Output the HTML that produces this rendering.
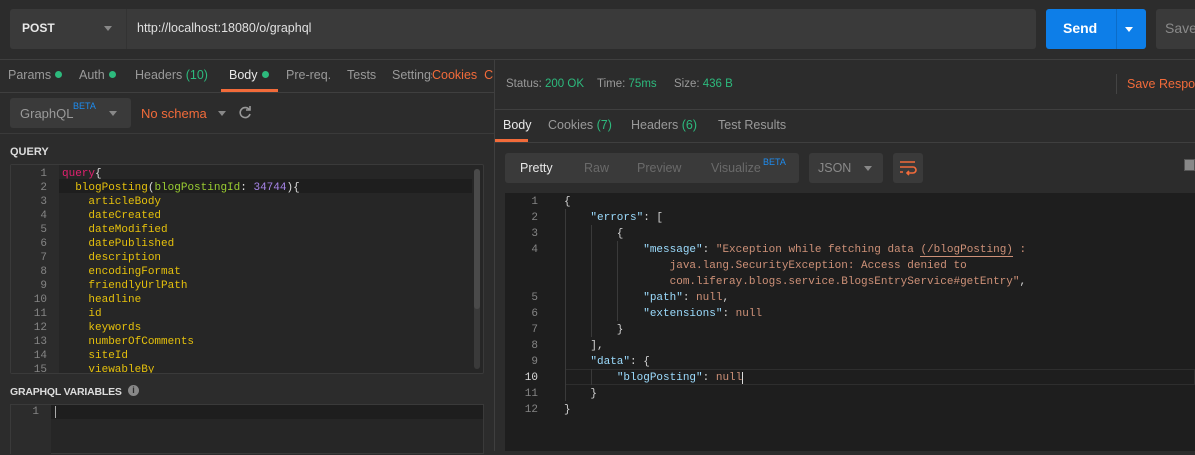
<!DOCTYPE html>
<html><head><meta charset="utf-8"><style>
*{margin:0;padding:0;box-sizing:border-box}
body{width:1195px;height:451px;background:#2c2c2c;font-family:"Liberation Sans",sans-serif;font-size:12px;color:#9a9a9a;position:relative;overflow:hidden}
.a{position:absolute;white-space:nowrap}
pre.a{white-space:pre}
.mono{font-family:"Liberation Mono",monospace}
.g{color:#2dba7d}
.o{color:#f26b3a}
.dot{display:inline-block;width:7px;height:7px;border-radius:50%;background:#2dba7d;margin-left:4px;vertical-align:1px}
.ln{position:absolute;text-align:right;color:#858585}
.t{position:absolute;top:68px;font-size:12.5px;white-space:nowrap}
.r{position:absolute;top:118px;font-size:12.5px;white-space:nowrap}
.s{position:absolute;top:78px;font-size:11.5px;white-space:nowrap}
.p{position:absolute;top:161px;font-size:12.5px;color:#6a6a6a;white-space:nowrap}
</style></head><body>
<!-- top bar -->
<div class="a" style="left:10px;top:9px;width:1026px;height:40px;background:#3a3a3a;border-radius:3px"></div>
<div class="a" style="left:126px;top:9px;width:1px;height:40px;background:#333"></div>
<div class="a" style="left:22px;top:21px;color:#e8e8e8;font-weight:bold;font-size:12px">POST</div>
<div class="a" style="left:104px;top:26px;border:4px solid transparent;border-top:5px solid #888;"></div>
<div class="a" style="left:137px;top:21px;color:#e0e0e0;font-size:12.5px">http://localhost:18080/o/graphql</div>
<div class="a" style="left:1046px;top:9px;width:100px;height:40px;background:#0d7ee8;border-radius:3px"></div>
<div class="a" style="left:1116px;top:9px;width:1px;height:40px;background:#0b6cc8"></div>
<div class="a" style="left:1063px;top:20px;color:#fff;font-weight:bold;font-size:14px">Send</div>
<div class="a" style="left:1125px;top:27px;border:4px solid transparent;border-top:5px solid #fff"></div>
<div class="a" style="left:1156px;top:9px;width:39px;height:40px;background:#3a3a3a;border-radius:3px 0 0 3px"></div>
<div class="a" style="left:1165px;top:20px;color:#8a8a8a;font-size:14px;width:30px;overflow:hidden">Save</div>
<div class="a" style="left:0;top:59px;width:1195px;height:1px;background:#3f3f3f"></div>
<!-- left tabs -->
<div class="t" style="left:8px">Params<span class="dot"></span></div>
<div class="t" style="left:79px">Auth<span class="dot"></span></div>
<div class="t" style="left:135px">Headers <span class="g">(10)</span></div>
<div class="t" style="left:229px;color:#e8e8e8">Body<span class="dot"></span></div>
<div class="t" style="left:286px">Pre-req.</div>
<div class="t" style="left:347px">Tests</div>
<div class="t" style="left:392px">Settings</div>
<div class="t o" style="left:432px;background:#2c2c2c;width:62px;overflow:hidden">Cookies &nbsp;C</div>
<div class="a" style="left:221px;top:89px;width:57px;height:3px;background:#f26b3a"></div>
<div class="a" style="left:0;top:92px;width:494px;height:1px;background:#3f3f3f"></div>
<div class="a" style="left:494px;top:59px;width:1px;height:392px;background:#3f3f3f"></div>
<!-- graphql row -->
<div class="a" style="left:10px;top:98px;width:121px;height:30px;background:#3a3a3a;border-radius:3px"></div>
<div class="a" style="left:20px;top:106px;font-size:13px;color:#9a9a9a">GraphQL</div>
<div class="a" style="left:73px;top:101px;font-size:9px;color:#1d8cf0">BETA</div>
<div class="a" style="left:109px;top:111px;border:4px solid transparent;border-top:5px solid #888"></div>
<div class="a o" style="left:141px;top:106px;font-size:13px">No schema</div>
<div class="a" style="left:218px;top:111px;border:4px solid transparent;border-top:5px solid #888"></div>
<svg class="a" style="left:238px;top:105px" width="14" height="14" viewBox="0 0 14 14"><path d="M11.5 5A5 5 0 1 0 12 9" fill="none" stroke="#999" stroke-width="1.6"/><path d="M8 5h4V1" fill="none" stroke="#999" stroke-width="1.6"/></svg>
<div class="a" style="left:0;top:133px;width:494px;height:1px;background:#3a3a3a"></div>
<div class="a" style="left:10px;top:146px;font-weight:bold;color:#ddd;font-size:11px">QUERY</div>
<!-- query editor -->
<div class="a" style="left:10px;top:164px;width:474px;height:210px;background:#262626;border:1px solid #3a3a3a;border-radius:2px;overflow:hidden">
<div class="a" style="left:0;top:0;width:48px;height:210px;background:#2c2c2c"></div>
<div class="a" style="left:48px;top:14px;width:413px;height:14px;background:#1e1e1e"></div>
<div class="a" style="left:463px;top:4px;width:6px;height:200px;background:#3a3a3a;border-radius:3px"></div>
<div class="a" style="left:463px;top:4px;width:6px;height:140px;background:#4a4a4a;border-radius:3px"></div>
<div class="ln mono" style="left:0;top:2px;width:36px;font-size:11px;line-height:14px">1<br>2<br>3<br>4<br>5<br>6<br>7<br>8<br>9<br>10<br>11<br>12<br>13<br>14<br>15</div>
<pre class="a mono" style="left:51px;top:2px;font-size:11px;line-height:14px;color:#e5c00c"><span style="color:#e0206e">query</span><span style="color:#ddd">{</span>
  blogPosting<span style="color:#ddd">(</span><span style="color:#9acd32">blogPostingId</span><span style="color:#ddd">: </span><span style="color:#a684e8">34744</span><span style="color:#ddd">){</span>
    articleBody
    dateCreated
    dateModified
    datePublished
    description
    encodingFormat
    friendlyUrlPath
    headline
    id
    keywords
    numberOfComments
    siteId
    viewableBy</pre>
</div>
<div class="a" style="left:10px;top:386px;font-weight:bold;color:#ddd;font-size:10.5px;letter-spacing:-0.2px">GRAPHQL VARIABLES</div>
<div class="a" style="left:128px;top:385px;width:11px;height:11px;border-radius:50%;background:#888;color:#2c2c2c;font-size:9px;text-align:center;line-height:11px;font-weight:bold">i</div>
<div class="a" style="left:10px;top:404px;width:474px;height:50px;background:#262626;border:1px solid #3a3a3a">
<div class="a" style="left:0;top:0;width:40px;height:50px;background:#2c2c2c"></div>
<div class="a" style="left:40px;top:0;width:432px;height:14px;background:#1e1e1e"></div>
<div class="a" style="left:44px;top:1px;width:1px;height:12px;background:#aaa"></div>
<div class="ln mono" style="left:0;top:1px;width:28px;font-size:11px">1</div>
</div>
<!-- right status -->
<div class="s" style="left:506px">Status: <span class="g">200 OK</span></div>
<div class="s" style="left:597px">Time: <span class="g">75ms</span></div>
<div class="s" style="left:674px">Size: <span class="g">436 B</span></div>
<div class="a" style="left:1116px;top:74px;width:1px;height:20px;background:#444"></div>
<div class="a o" style="left:1127px;top:77px;font-size:12.5px;width:68px;overflow:hidden">Save Response</div>
<div class="a" style="left:495px;top:109px;width:700px;height:1px;background:#3f3f3f"></div>
<div class="r" style="left:503px;color:#e8e8e8">Body</div>
<div class="r" style="left:548px">Cookies <span class="g">(7)</span></div>
<div class="r" style="left:631px">Headers <span class="g">(6)</span></div>
<div class="r" style="left:718px">Test Results</div>
<div class="a" style="left:495px;top:139px;width:33px;height:3px;background:#f26b3a"></div>
<div class="a" style="left:495px;top:142px;width:700px;height:1px;background:#3f3f3f"></div>
<!-- toolbar -->
<div class="a" style="left:505px;top:153px;width:294px;height:30px;background:#3a3a3a;border-radius:3px"></div>
<div class="p" style="left:520px;color:#e8e8e8">Pretty</div>
<div class="p" style="left:584px">Raw</div>
<div class="p" style="left:637px">Preview</div>
<div class="p" style="left:711px">Visualize</div>
<div class="a" style="left:763px;top:157px;font-size:9px;color:#1d8cf0">BETA</div>
<div class="a" style="left:809px;top:153px;width:74px;height:30px;background:#3a3a3a;border-radius:3px"></div>
<div class="a" style="left:818px;top:161px;font-size:12.5px;color:#8a8a8a">JSON</div>
<div class="a" style="left:864px;top:166px;border:4px solid transparent;border-top:5px solid #888"></div>
<div class="a" style="left:893px;top:153px;width:30px;height:30px;background:#3a3a3a;border-radius:3px"></div>
<svg class="a" style="left:898px;top:158px" width="20" height="20" viewBox="0 0 20 20"><path d="M2 4h15M2 9h13a3 3 0 0 1 0 6h-6M11 13l-2 2 2 2M2 14h3" fill="none" stroke="#f26b3a" stroke-width="1.6"/></svg>
<div class="a" style="left:1184px;top:159px;width:11px;height:12px;background:#888;border:1px solid #555"></div>
<!-- response code -->
<div class="a" style="left:505px;top:193px;width:690px;height:258px;background:#1e1e1e"></div>
<div class="a" style="left:565px;top:369px;width:630px;height:16px;border:1px solid #2e2e2e"></div>
<div class="a" style="left:565px;top:209px;width:1px;height:192px;background:#3a3a3a"></div>
<div class="a" style="left:591px;top:225px;width:1px;height:112px;background:#3a3a3a"></div>
<div class="a" style="left:617px;top:241px;width:1px;height:80px;background:#3a3a3a"></div>
<div class="a" style="left:591px;top:369px;width:1px;height:16px;background:#3a3a3a"></div>
<div class="ln mono" style="left:505px;top:194px;width:33px;font-size:11px;line-height:16px">1<br>2<br>3<br>4<br><br><br>5<br>6<br>7<br>8<br>9<br><span style="color:#ddd">10</span><br>11<br>12</div>
<pre class="a mono" style="left:564px;top:194px;font-size:11px;line-height:16px;color:#d4d4d4">{
    <span style="color:#9cdcfe">"errors"</span>: [
        {
            <span style="color:#9cdcfe">"message"</span>: <span style="color:#ce9178">"Exception while fetching data <span style="border-bottom:1px solid #ce9178">(/blogPosting)</span> :</span>
<span style="color:#ce9178">                java.lang.SecurityException: Access denied to</span>
<span style="color:#ce9178">                com.liferay.blogs.service.BlogsEntryService#getEntry"</span>,
            <span style="color:#9cdcfe">"path"</span>: <span style="color:#ce9178">null</span>,
            <span style="color:#9cdcfe">"extensions"</span>: <span style="color:#ce9178">null</span>
        }
    ],
    <span style="color:#9cdcfe">"data"</span>: {
        <span style="color:#9cdcfe">"blogPosting"</span>: <span style="color:#ce9178">null</span><span style="border-left:1px solid #ddd"></span>
    }
}</pre>
</body></html>
